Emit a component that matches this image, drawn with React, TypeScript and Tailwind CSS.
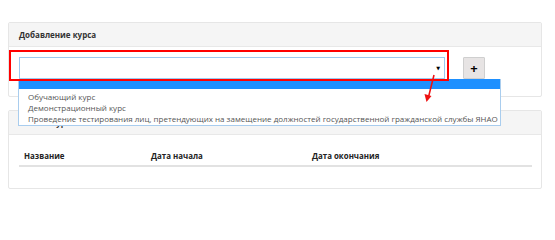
import { useState } from 'react';

const options = [
  'Обучающий курс',
  'Демонстрационный курс',
  'Проведение тестирования лиц, претендующих на замещение должностей государственной гражданской службы ЯНАО',
];

function CourseSelect() {
  const [value] = useState('');
  return (
    <div className="flex items-center pt-[10px] pb-[17px] pl-[10px]">
      <div className="relative w-[426px] h-[22px] border border-[#9cc8ef] bg-white">
        <span className="sr-only">{value}</span>
        <span className="absolute right-[4px] top-[8px] text-[5px] text-black leading-none">▼</span>
      </div>
      <button className="ml-[18px] w-[22px] h-[22px] flex items-center justify-center bg-[#e7e4e4] border border-[#cfcfcf] rounded-[1px] text-[13px] font-bold text-black leading-none">
        +
      </button>
    </div>
  );
}

export default function App() {
  return (
    <div
      className="relative w-[555px] h-[210px] bg-white overflow-hidden pt-[22px] px-[8px]"
      style={{ fontFamily: '"Open Sans", "DejaVu Sans", sans-serif' }}
    >
      <div className="w-[534px] border border-[#e6e6e6] rounded-[2px]">
        <div className="h-[24px] flex items-center px-[10px] bg-[#f5f5f5] border-b border-[#e8e8e8] text-[8px] font-bold text-[#333]">
          Добавление курса
        </div>
        <CourseSelect />
      </div>

      <div className="mt-[13px] w-[534px] border border-[#e6e6e6] rounded-[2px]">
        <div className="h-[24px] flex items-center px-[10px] bg-[#f5f5f5] border-b border-[#e8e8e8] text-[8px] font-bold text-[#333]">
          Список курсов в основе
        </div>
        <div className="pt-[13px] pb-[21px] pl-[10px] pr-[9px]">
          <div className="grid grid-cols-[127px_161px_1fr] h-[19px] items-center pl-[5px] border-b-2 border-[#e2e2e2] text-[7.9px] font-bold text-[#222]">
            <span>Название</span>
            <span>Дата начала</span>
            <span>Дата окончания</span>
          </div>
        </div>
      </div>

      {/* open dropdown list */}
      <div className="absolute left-[18px] top-[79px] w-[483px] bg-white border border-[#a9cdee] border-t-0">
        <div className="h-[10px] bg-[#1e90ff] mb-[2px]" />
        {options.map((o) => (
          <div key={o} className="h-[11px] pl-[9px] flex items-center text-[8px] text-[#555] whitespace-nowrap leading-none">
            {o}
          </div>
        ))}
        <div className="h-[1px]" />
      </div>

      {/* red annotation box */}
      <div className="absolute left-[9px] top-[50px] w-[440px] h-[31px] border-2 border-[#ff0000]" />

      {/* red annotation arrow */}
      <svg className="absolute left-[420px] top-[72px]" width="20" height="34" viewBox="0 0 20 34">
        <line x1="14" y1="3" x2="8.5" y2="25" stroke="#ee1111" strokeWidth="1.6" />
        <polygon points="6.5,30 4.5,22 11.5,24" fill="#ee1111" />
      </svg>
    </div>
  );
}
